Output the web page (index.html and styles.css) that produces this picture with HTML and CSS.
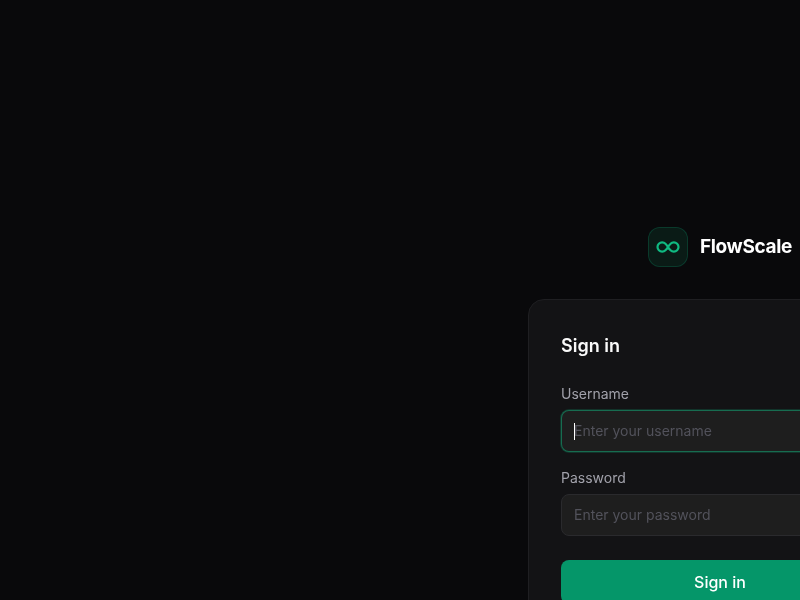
FILE: index.html
```html
<!DOCTYPE html>
<html lang="en">
<head>
<meta charset="utf-8">
<title>FlowScale - Sign in</title>
<link rel="stylesheet" href="styles.css">
</head>
<body>
<main class="page">
  <div class="brand">
    <div class="logo">
      <svg class="logo-icon" viewBox="0 0 24 24" fill="none" stroke="#10b981" stroke-width="1.9" stroke-linecap="round" stroke-linejoin="round">
        <path d="M9.828 9.172a4 4 0 1 0 0 5.656a10 10 0 0 0 2.172-2.828a10 10 0 0 1 2.172-2.828a4 4 0 1 1 0 5.656a10 10 0 0 1-2.172-2.828a10 10 0 0 0-2.172-2.828"/>
      </svg>
    </div>
    <span class="brand-name">FlowScale</span>
  </div>
  <form class="card">
    <h1 class="title">Sign in</h1>
    <div class="field">
      <label class="label" for="username">Username</label>
      <div class="input-wrap">
        <input class="input input-focus" id="username" type="text" placeholder="Enter your username">
        <span class="caret"></span>
      </div>
    </div>
    <div class="field">
      <label class="label" for="password">Password</label>
      <input class="input" id="password" type="password" placeholder="Enter your password">
    </div>
    <button class="submit" type="button">Sign in</button>
  </form>
</main>
</body>
</html>
```
FILE: styles.css
```css
* { box-sizing: border-box; }
html, body {
  margin: 0;
  width: 800px;
  height: 600px;
  overflow: hidden;
  background: #09090b;
}
.page {
  width: 1440px;
  display: flex;
  flex-direction: column;
  align-items: center;
  padding-top: 227px;
  font-family: Inter, "Liberation Sans", sans-serif;
  will-change: transform;
}
.brand {
  display: flex;
  align-items: center;
  gap: 12px;
  margin-bottom: 32px;
}
.logo {
  width: 40px;
  height: 40px;
  border-radius: 12px;
  border: 1px solid rgba(16, 185, 129, 0.2);
  background: rgba(16, 185, 129, 0.1);
  display: flex;
  align-items: center;
  justify-content: center;
}
.logo-icon {
  width: 28px;
  height: 28px;
  flex: none;
}
.brand-name {
  font-size: 19px;
  line-height: 28px;
  font-weight: 700;
  letter-spacing: -0.33px;
  color: #fff;
}
.card {
  width: 384px;
  padding: 32px;
  background: #131315;
  border: 1px solid #1f1f22;
  border-radius: 16px;
}
.title {
  margin: 0 0 24px;
  font-size: 18px;
  line-height: 28px;
  font-weight: 600;
  color: #fafafa;
}
.field { margin-bottom: 16px; }
.label {
  display: block;
  margin-bottom: 6px;
  font-size: 14px;
  line-height: 20px;
  color: #a1a1aa;
}
.input-wrap { position: relative; }
.input {
  display: block;
  width: 100%;
  height: 42px;
  padding: 0 12px 2px;
  font: 400 14px Inter, "Liberation Sans", sans-serif;
  color: #fff;
  background: #1e1e1e;
  border: 1px solid #2a2a2d;
  border-radius: 8px;
  outline: none;
}
.input::placeholder { color: #52525b; opacity: 1; }
.input-focus {
  border-color: rgba(16, 185, 129, 0.5);
  box-shadow: 0 0 0 1px rgba(16, 185, 129, 0.2);
}
.caret {
  position: absolute;
  left: 13px;
  top: 13px;
  width: 1px;
  height: 17px;
  background: #fff;
}
.submit {
  display: block;
  width: 100%;
  height: 44px;
  margin-top: 24px;
  font: 500 16px Inter, "Liberation Sans", sans-serif;
  color: #fff;
  background: #059669;
  border: 0;
  border-radius: 8px;
}
```
